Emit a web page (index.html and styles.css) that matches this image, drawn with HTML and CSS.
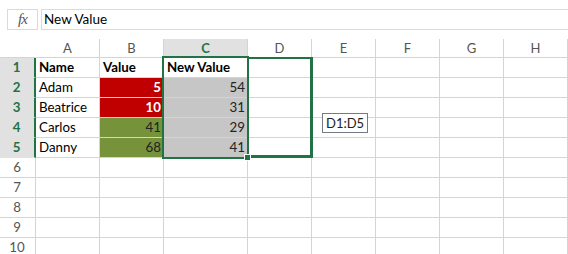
FILE: index.html
```html
<!DOCTYPE html>
<html lang="en">
<head>
    <meta charset="UTF-8">
    <title>Sheet</title>
    <link rel="stylesheet" href="styles.css">
</head>
<body>

    <div class="formula-bar">
        <div class="fx">fx</div>
        <div class="formula-input">New Value</div>
    </div>

    <div class="sheet">
        <div class="grid">
            <div class="c corner"></div>
            <div class="c col-head">A</div>
            <div class="c col-head">B</div>
            <div class="c col-head active">C</div>
            <div class="c col-head">D</div>
            <div class="c col-head">E</div>
            <div class="c col-head">F</div>
            <div class="c col-head">G</div>
            <div class="c col-head">H</div>

            <div class="c row-head active">1</div>
            <div class="c bold">Name</div>
            <div class="c bold">Value</div>
            <div class="c bold">New Value</div>
            <div class="c"></div><div class="c"></div><div class="c"></div><div class="c"></div><div class="c"></div>

            <div class="c row-head active">2</div>
            <div class="c">Adam</div>
            <div class="c num red">5</div>
            <div class="c num sel">54</div>
            <div class="c"></div><div class="c"></div><div class="c"></div><div class="c"></div><div class="c"></div>

            <div class="c row-head active">3</div>
            <div class="c">Beatrice</div>
            <div class="c num red">10</div>
            <div class="c num sel">31</div>
            <div class="c"></div><div class="c"></div><div class="c"></div><div class="c"></div><div class="c"></div>

            <div class="c row-head active">4</div>
            <div class="c">Carlos</div>
            <div class="c num green">41</div>
            <div class="c num sel">29</div>
            <div class="c"></div><div class="c"></div><div class="c"></div><div class="c"></div><div class="c"></div>

            <div class="c row-head active">5</div>
            <div class="c">Danny</div>
            <div class="c num green">68</div>
            <div class="c num sel">41</div>
            <div class="c"></div><div class="c"></div><div class="c"></div><div class="c"></div><div class="c"></div>

            <div class="c row-head">6</div>
            <div class="c"></div><div class="c"></div><div class="c"></div><div class="c"></div><div class="c"></div><div class="c"></div><div class="c"></div><div class="c"></div>
            <div class="c row-head">7</div>
            <div class="c"></div><div class="c"></div><div class="c"></div><div class="c"></div><div class="c"></div><div class="c"></div><div class="c"></div><div class="c"></div>
            <div class="c row-head">8</div>
            <div class="c"></div><div class="c"></div><div class="c"></div><div class="c"></div><div class="c"></div><div class="c"></div><div class="c"></div><div class="c"></div>
            <div class="c row-head">9</div>
            <div class="c"></div><div class="c"></div><div class="c"></div><div class="c"></div><div class="c"></div><div class="c"></div><div class="c"></div><div class="c"></div>
            <div class="c row-head">10</div>
            <div class="c"></div><div class="c"></div><div class="c"></div><div class="c"></div><div class="c"></div><div class="c"></div><div class="c"></div><div class="c"></div>
        </div>

        <!-- selection and drag outlines sit over the grid -->
        <div class="selection"></div>
        <div class="drag-range"></div>
        <div class="fill-handle"></div>
        <div class="range-tip">D1:D5</div>
    </div>

</body>
</html>
```

FILE: styles.css
```css
body {
    margin: 0;
    background: #fff;
    font-family: Lato, "Liberation Sans", sans-serif;
    color: #000;
    width: 568px;
    height: 254px;
    overflow: hidden;
}
.formula-bar {
    display: flex;
    gap: 3px;
    padding: 9px 0 0 7px;
    height: 30px;
    box-sizing: border-box;
}
.fx, .formula-input {
    height: 21px;
    box-sizing: border-box;
    border: 1px solid #dadada;
}
.fx {
    width: 31px;
    text-align: center;
    font-family: "Liberation Serif", serif;
    font-style: italic;
    font-size: 15px;
    line-height: 18px;
    color: #555;
    letter-spacing: -1px;
}
.formula-input {
    flex: 1;
    border-right: none;
    padding-left: 2px;
    font-size: 13.5px;
    line-height: 19px;
}
.sheet {
    position: relative;
    margin-top: 9px;
}
.grid {
    display: grid;
    grid-template-columns: 36px 64px 64px 84px repeat(5, 64px);
    grid-template-rows: 19px repeat(10, 20px);
}
.c {
    box-sizing: border-box;
    border-right: 1px solid #d4d4d4;
    border-bottom: 1px solid #d4d4d4;
    padding: 0 3px;
    font-size: 13.3px;
    line-height: 19px;
    white-space: nowrap;
    overflow: hidden;
}
.bold {
    font-weight: 700;
}
.num {
    text-align: right;
    padding-right: 2px;
}
.red {
    background: #c00000;
    color: #fff;
    font-weight: 700;
}
.green {
    background: #76933c;
    color: #222;
}
.sel {
    background: #c6c6c6;
    color: #222;
}
.col-head {
    text-align: center;
    color: #555;
    font-size: 13px;
    line-height: 18px;
}
.col-head.active {
    background: #e1e1e1;
    color: #217346;
    font-weight: 700;
    border-bottom-color: #217346;
}
.corner {
    border-right-color: #fff;
}
.row-head {
    text-align: center;
    color: #555;
    padding: 0;
    padding-right: 1px;
}
.row-head.active {
    background: #e1e1e1;
    color: #217346;
    font-weight: 700;
    border-right: 2px solid #217346;
    border-bottom-color: #e1e1e1;
}
.selection {
    position: absolute;
    left: 162px;
    top: 17px;
    width: 87px;
    height: 103px;
    box-sizing: border-box;
    border: 2px solid #217346;
}
.drag-range {
    position: absolute;
    left: 247px;
    top: 18px;
    width: 66px;
    height: 101px;
    box-sizing: border-box;
    border: 3px solid #217346;
    border-width: 2px 3px 3px 2px;
}
.fill-handle {
    position: absolute;
    left: 244px;
    top: 115px;
    width: 5px;
    height: 5px;
    background: #217346;
    border: 1px solid #fff;
}
.range-tip {
    position: absolute;
    left: 322px;
    top: 74px;
    height: 20px;
    box-sizing: border-box;
    padding: 0 3px;
    border: 1px solid #737b84;
    background: #fff;
    font-size: 13px;
    line-height: 18px;
    color: #222;
}
```
